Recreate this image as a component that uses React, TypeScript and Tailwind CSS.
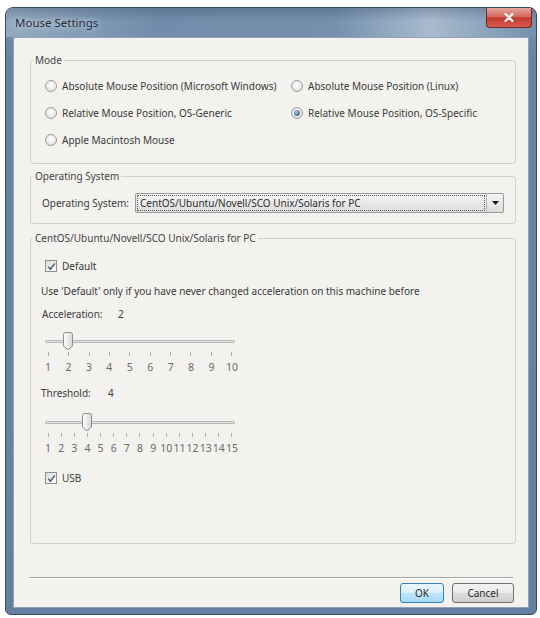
import React from "react";

function Radio({ checked, label }: { checked?: boolean; label: string }) {
  return (
    <div className="flex items-center h-[27px]">
      <span className="w-[12px] h-[12px] rounded-full border border-[#9c9c9c] bg-[radial-gradient(circle_at_50%_40%,#ffffff,#d9d9d9)] flex items-center justify-center shrink-0">
        {checked && (
          <span className="w-[6px] h-[6px] rounded-full bg-[radial-gradient(circle_at_40%_35%,#a9c4dd,#234770)]" />
        )}
      </span>
      <span className="ml-[5px] text-[#3a3a3a] whitespace-nowrap">{label}</span>
    </div>
  );
}

function Check({ label, className }: { label: string; className?: string }) {
  return (
    <div className={"flex items-center h-[14px] " + (className ?? "")}>
      <span className="w-[12px] h-[12px] border border-[#8f8f8f] bg-[linear-gradient(135deg,#dcdcdc,#ffffff)] flex items-center justify-center shrink-0">
        <svg width="9" height="9" viewBox="0 0 9 9">
          <path d="M1.3 4.6 L3.4 7.2 L7.8 1.4" stroke="#4a5c70" strokeWidth="1.5" fill="none" strokeLinejoin="round" />
        </svg>
      </span>
      <span className="ml-[5px] text-[#3a3a3a]">{label}</span>
    </div>
  );
}

function Slider({ min, max, value, className }: { min: number; max: number; value: number; className?: string }) {
  const W = 184;
  const nums: number[] = [];
  for (let i = min; i <= max; i++) nums.push(i);
  const pos = ((value - min) / (max - min)) * W;
  return (
    <div className={"ml-[17px] w-[184px] " + (className ?? "")}>
      <div className="relative h-[20px] pt-[9px]">
        <div className="ml-[-3px] w-[190px] h-[3px] border border-[#b7b7b7] bg-[#e4e4e4] rounded-[1px]" />
        <svg
          className="absolute top-[1px]"
          style={{ left: pos - 5 }}
          width="10"
          height="18"
          viewBox="0 0 10 18"
        >
          <defs>
            <linearGradient id={"tg" + max} x1="0" y1="0" x2="1" y2="0">
              <stop offset="0" stopColor="#ffffff" />
              <stop offset="1" stopColor="#d6d6d6" />
            </linearGradient>
          </defs>
          <path
            d="M0.5 2.5 Q0.5 0.5 2.5 0.5 H7.5 Q9.5 0.5 9.5 2.5 V13 Q9.5 14 8.5 15 L5.8 17.2 Q5 17.8 4.2 17.2 L1.5 15 Q0.5 14 0.5 13 Z"
            fill={"url(#tg" + max + ")"}
            stroke="#8c8c8c"
            strokeWidth="1"
          />
        </svg>
      </div>
      <div className="flex justify-between h-[4px] mt-[1px]">
        {nums.map((n) => (
          <span key={n} className="w-px h-[4px] bg-[#b0b0b0]" />
        ))}
      </div>
      <div className="flex justify-between h-[12px] mt-[5px]">
        {nums.map((n) => (
          <div key={n} className="w-0 flex justify-center">
            <span className="text-[10.5px] leading-[12px] text-[#6a6a6a] whitespace-nowrap">{n}</span>
          </div>
        ))}
      </div>
    </div>
  );
}

export default function App() {
  return (
    <div className="w-[540px] h-[618px] bg-white pt-[7px] pl-[5px] font-['Noto_Sans',sans-serif] text-[10px] leading-[14px]">
      <div className="w-[532px] h-[608px] rounded-t-[8px] rounded-b-[6px] border border-[#354a61] bg-[linear-gradient(to_bottom,#7893b0,#6884a4_8%,#6480a1)] flex flex-col">
        {/* Title bar */}
        <div className="h-[29px] flex items-start rounded-t-[7px] bg-[linear-gradient(to_bottom,rgba(30,50,80,0.25),rgba(255,255,255,0)_45%),linear-gradient(to_right,#93aac1,#728dab_28%,#7590ad_62%,#a8bbce_80%,#7590ad)] pl-[9px] pr-[4px]">
          <span className="mt-[8px] text-[11.5px] leading-[14px] text-[#1f2d3d] [text-shadow:0_0_6px_rgba(255,255,255,0.9)]">
            Mouse Settings
          </span>
          <div className="ml-auto w-[46px] h-[20px] rounded-b-[4px] border border-t-0 border-[#6e2a24] bg-[linear-gradient(to_bottom,#e6a79c,#d26a5d_45%,#c2392c_52%,#d85c4e)] flex items-center justify-center">
            <svg width="10" height="9" viewBox="0 0 10 9">
              <path d="M1.5 1 L8.5 8 M8.5 1 L1.5 8" stroke="#ffffff" strokeWidth="2.2" strokeLinecap="round" />
            </svg>
          </div>
        </div>

        {/* Content */}
        <div className="ml-[7px] mr-[7px] mb-[6px] flex-1 border border-[#8fa3b9] bg-[#f3f2ef] flex flex-col">
          {/* Mode */}
          <fieldset className="mt-[15px] ml-[16px] w-[486px] h-[111px] border border-[#d2d1cd] rounded-[3px]">
            <legend className="ml-[2px] px-[2px] text-[#444]">Mode</legend>
            <div className="mt-[5px] ml-[14px] grid grid-cols-[246px_1fr]">
              <Radio label="Absolute Mouse Position (Microsoft Windows)" />
              <Radio label="Absolute Mouse Position (Linux)" />
              <Radio label="Relative Mouse Position, OS-Generic" />
              <Radio checked label="Relative Mouse Position, OS-Specific" />
              <Radio label="Apple Macintosh Mouse" />
            </div>
          </fieldset>

          {/* Operating System */}
          <fieldset className="mt-[5px] ml-[16px] w-[486px] h-[55px] border border-[#d2d1cd] rounded-[3px]">
            <legend className="ml-[2px] px-[2px] text-[#444]">Operating System</legend>
            <div className="mt-[10px] ml-[11px] flex items-center h-[20px]">
              <span className="w-[93px] text-[#3a3a3a]">Operating System:</span>
              <div className="w-[369px] h-[20px] border border-[#9a9a9a] rounded-[2px] bg-[linear-gradient(to_bottom,#f4f4f4,#e9e9e9_50%,#dcdcdc)] flex">
                <div className="flex-1 m-[1px] border border-dotted border-[#5a5a5a] flex items-center pl-[2px] text-[#2e2e2e]">
                  CentOS/Ubuntu/Novell/SCO Unix/Solaris for PC
                </div>
                <div className="w-[17px] border-l border-[#b5b5b5] flex items-center justify-center">
                  <svg width="7" height="4" viewBox="0 0 7 4">
                    <path d="M0 0 H7 L3.5 4 Z" fill="#1b1b1b" />
                  </svg>
                </div>
              </div>
            </div>
          </fieldset>

          {/* CentOS group */}
          <fieldset className="mt-[7px] ml-[16px] w-[486px] h-[313px] border border-[#d2d1cd] rounded-[3px]">
            <legend className="ml-[2px] px-[2px] text-[#444]">CentOS/Ubuntu/Novell/SCO Unix/Solaris for PC</legend>
            <div className="flex flex-col">
              <Check label="Default" className="mt-[14px] ml-[14px]" />
              <div className="mt-[11px] ml-[10px] text-[#3a3a3a]">
                Use 'Default' only if you have never changed acceleration on this machine before
              </div>
              <div className="mt-[9px] ml-[11px] flex text-[#3a3a3a]">
                <span className="w-[76px]">Acceleration:</span>
                <span>2</span>
              </div>
              <Slider min={1} max={10} value={2} className="mt-[10px]" />
              <div className="mt-[13px] ml-[10px] flex text-[#3a3a3a]">
                <span className="w-[67px]">Threshold:</span>
                <span>4</span>
              </div>
              <Slider min={1} max={15} value={4} className="mt-[12px]" />
              <Check label="USB" className="mt-[17px] ml-[14px]" />
            </div>
          </fieldset>

          {/* Separator */}
          <div className="mt-[33px] ml-[15px] w-[484px] h-[2px] border-t border-[#a3a3a3] border-b border-b-white" />

          {/* Buttons */}
          <div className="mt-[4px] mr-[14px] flex justify-end gap-[8px]">
            <button className="w-[44px] h-[20px] rounded-[3px] border border-[#3c7fb1] bg-[linear-gradient(to_bottom,#eaf6fd,#d9f0fc_50%,#bee6fd_51%,#a7d9f5)] text-[#2a2a2a] text-[10px]">
              OK
            </button>
            <button className="w-[62px] h-[20px] rounded-[3px] border border-[#707070] bg-[linear-gradient(to_bottom,#f2f2f2,#ebebeb_50%,#dddddd_51%,#cfcfcf)] text-[#2a2a2a] text-[10px]">
              Cancel
            </button>
          </div>
        </div>
      </div>
    </div>
  );
}
